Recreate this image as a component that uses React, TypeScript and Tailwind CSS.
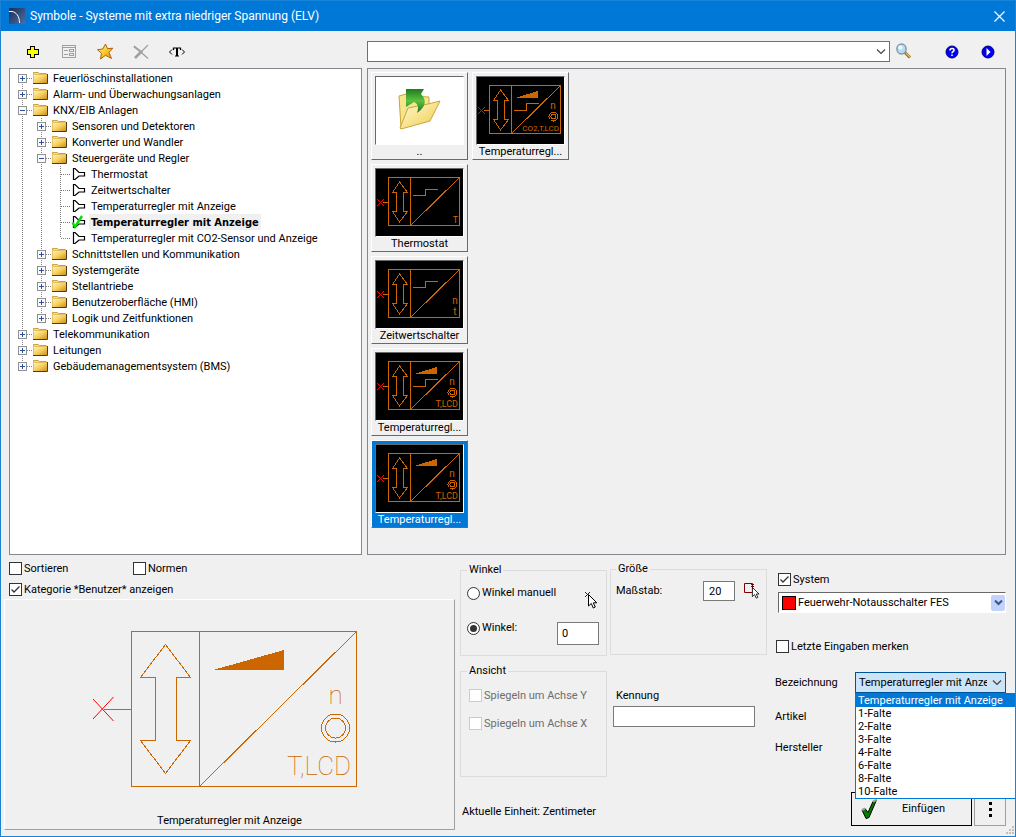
import React, { useState } from 'react';

interface TreeRow {
  label: string;
  depth: number;
  kind: 'open' | 'closed' | 'leaf';
  last?: boolean;
}

const treeRows: TreeRow[] = [
  { label: 'Feuerlöschinstallationen', depth: 0, kind: 'closed' },
  { label: 'Alarm- und Überwachungsanlagen', depth: 0, kind: 'closed' },
  { label: 'KNX/EIB Anlagen', depth: 0, kind: 'open' },
  { label: 'Sensoren und Detektoren', depth: 1, kind: 'closed' },
  { label: 'Konverter und Wandler', depth: 1, kind: 'closed' },
  { label: 'Steuergeräte und Regler', depth: 1, kind: 'open' },
  { label: 'Thermostat', depth: 2, kind: 'leaf' },
  { label: 'Zeitwertschalter', depth: 2, kind: 'leaf' },
  { label: 'Temperaturregler mit Anzeige', depth: 2, kind: 'leaf' },
  { label: 'Temperaturregler mit Anzeige', depth: 2, kind: 'leaf' },
  { label: 'Temperaturregler mit CO2-Sensor und Anzeige', depth: 2, kind: 'leaf', last: true },
  { label: 'Schnittstellen und Kommunikation', depth: 1, kind: 'closed' },
  { label: 'Systemgeräte', depth: 1, kind: 'closed' },
  { label: 'Stellantriebe', depth: 1, kind: 'closed' },
  { label: 'Benutzeroberfläche (HMI)', depth: 1, kind: 'closed' },
  { label: 'Logik und Zeitfunktionen', depth: 1, kind: 'closed', last: true },
  { label: 'Telekommunikation', depth: 0, kind: 'closed' },
  { label: 'Leitungen', depth: 0, kind: 'closed' },
  { label: 'Gebäudemanagementsystem (BMS)', depth: 0, kind: 'closed', last: true },
];

const names = [
  'Temperaturregler mit Anzeige',
  '1-Falte',
  '2-Falte',
  '3-Falte',
  '4-Falte',
  '6-Falte',
  '8-Falte',
  '10-Falte',
];

/* ---------- Icons ---------- */

const AppIcon = () => (
  <svg width="16" height="16" viewBox="0 0 16 16">
    <defs>
      <linearGradient id="app" x1="0" y1="0" x2="1" y2="1">
        <stop offset="0" stopColor="#1b2c55" />
        <stop offset="1" stopColor="#4d6ea6" />
      </linearGradient>
    </defs>
    <rect width="16" height="16" fill="url(#app)" />
    <path d="M0 3.5H3C7 4 10.5 8 10.5 15" fill="none" stroke="#fff" />
  </svg>
);

const PlusIcon = () => (
  <svg width="14" height="14" viewBox="0 0 14 14" shapeRendering="crispEdges">
    <path d="M4.5 1.5H8.5V4.5H12.5V9.5H8.5V12.5H4.5V9.5H1.5V4.5H4.5Z" fill="#ffff00" stroke="#000" />
  </svg>
);

const FormIcon = () => (
  <svg width="16" height="16" viewBox="0 0 16 16" fill="none" stroke="#a0a0a0" shapeRendering="crispEdges">
    <path d="M1.5 1.5H14.5V13.5H1.5ZM1 3.5H15M3 6.5H7M3 10.5H7M8.5 5.5H12.5V7.5H8.5ZM8.5 9.5H12.5V11.5H8.5Z" />
  </svg>
);

const StarIcon = () => (
  <svg width="18" height="18" viewBox="0 0 18 18">
    <defs>
      <linearGradient id="star" x1="0" y1="0" x2="1" y2="1">
        <stop offset="0" stopColor="#fff3a0" />
        <stop offset="0.5" stopColor="#ffc92e" />
        <stop offset="1" stopColor="#d88a10" />
      </linearGradient>
    </defs>
    <path
      d="M9.5 1L11.5 5.7L16.8 5.2L13 9.5L15.5 15.5L9.5 12.3L4.5 16L5.5 10.3L1.5 6.7L6.8 6Z"
      fill="url(#star)"
      stroke="#a8650c"
      strokeLinejoin="round"
    />
  </svg>
);

const DeleteIcon = () => (
  <svg width="18" height="16" viewBox="0 0 18 16" fill="none" stroke="#a0a0a0">
    <path d="M2 2L16 14.5" strokeWidth="1.4" />
    <path d="M2 2.5L8 7" strokeWidth="2" />
    <path d="M16 1L9.5 7.5" strokeWidth="1.2" />
    <path d="M10 7L3 14" strokeWidth="2.6" />
  </svg>
);

const TextTagIcon = () => (
  <svg width="18" height="14" viewBox="0 0 18 14" fill="none" stroke="#000">
    <path d="M4 4.5L1.5 7L4 9.5M14 4.5L16.5 7L14 9.5" />
    <path d="M5.5 5V3H12.5V5M7 11H11" strokeWidth="1.2" />
    <path d="M9 3V11" strokeWidth="2" />
  </svg>
);

const MagnifierIcon = () => (
  <svg width="18" height="18" viewBox="0 0 18 18">
    <path d="M10 9.5L15 14.5" stroke="#8a6a28" strokeWidth="3" />
    <path d="M11 10L15 14" stroke="#e8bd55" strokeWidth="1.4" />
    <ellipse cx="6.5" cy="6" rx="4.6" ry="5" fill="#b9dcf2" stroke="#8494a5" strokeWidth="1.4" />
    <ellipse cx="5.5" cy="4.5" rx="2.2" ry="2" fill="#f2faff" />
  </svg>
);

const HelpIcon = () => (
  <svg width="14" height="14" viewBox="0 0 14 14">
    <circle cx="7" cy="7" r="6" fill="#0000f0" stroke="#000080" />
    <path d="M5 5.5C5 2.8 9.3 2.9 9 5.3C8.8 6.7 7 6.5 7 8.2M7 9.5V11" fill="none" stroke="#fff" strokeWidth="1.6" />
  </svg>
);

const PlayIcon = () => (
  <svg width="14" height="14" viewBox="0 0 14 14">
    <circle cx="7" cy="7" r="6" fill="#0000f0" stroke="#000080" />
    <path d="M5.5 3L9.5 7L5.5 11Z" fill="#fff" />
  </svg>
);

const FolderIcon = () => (
  <svg width="17" height="14" viewBox="0 0 17 14" className="shrink-0">
    <defs>
      <linearGradient id="folder" x1="0" y1="0" x2="1" y2="1">
        <stop offset="0" stopColor="#fff6bf" />
        <stop offset="0.5" stopColor="#f7d061" />
        <stop offset="1" stopColor="#c98d13" />
      </linearGradient>
    </defs>
    <path d="M1.5 3V1.5H6.5L7.5 2.5H14.5V4" fill="#f3dd9a" stroke="#c9a24b" />
    <path d="M1 3.5H15V12.5H1Z" fill="url(#folder)" />
    <path d="M1.5 12V3.5H14" fill="none" stroke="#e6bd58" />
    <path d="M1 12.5H15.5V3" fill="none" stroke="#4f3c12" />
  </svg>
);

const LeafIcon = ({ checked }: { checked: boolean }) => (
  <svg width="17" height="16" viewBox="0 0 17 16" fill="none" className="shrink-0">
    <path d="M3.5 2.5V13.5H5L9 10H14.5V6.5H9L5 2.5Z" fill="#fff" stroke="#000" strokeWidth="1.2" />
    {checked && <path d="M2.5 8.5L5 13L12 2" stroke="#00e000" strokeWidth="2.4" />}
  </svg>
);

const ChevronIcon = () => (
  <svg width="10" height="6" viewBox="0 0 10 6" fill="none" stroke="#444">
    <path d="M1 0.5L5 4.5L9 0.5" strokeWidth="1.2" />
  </svg>
);

const CursorShape = () => (
  <path d="M0.5 0.5V12L3.3 9.5L5.3 14L7.3 13L5.3 8.8H8.8Z" fill="#fff" stroke="#000" />
);

const UpFolderIcon = () => (
  <svg width="87" height="67" viewBox="0 0 87 67">
    <defs>
      <linearGradient id="upfolder" x1="0" y1="0" x2="1" y2="1">
        <stop offset="0" stopColor="#fffdd8" />
        <stop offset="1" stopColor="#f0c948" />
      </linearGradient>
      <linearGradient id="uparrow" x1="0" y1="0" x2="0" y2="1">
        <stop offset="0" stopColor="#217a1f" />
        <stop offset="0.5" stopColor="#5cc23f" />
        <stop offset="1" stopColor="#1e6e22" />
      </linearGradient>
    </defs>
    <path d="M23 19L30 17L33 19L53 20L53 43L25 51Z" fill="#f8e48a" stroke="#c9a53a" />
    <path d="M24 51L32 31L52 27L64 24L54 44L25 52Z" fill="url(#upfolder)" stroke="#c9a53a" />
    <path d="M30 12H48L45 17C51 23 50 30 41 36C43 30 42 27 38 25L30 30Z" fill="url(#uparrow)" />
  </svg>
);

/* ---------- CAD symbol drawings ---------- */

interface SymbolThumbProps {
  step?: 'high' | 'low';
  wedge?: boolean;
  display?: string;
  sensor?: boolean;
  counter?: boolean;
}

const SymbolThumb = ({ step, wedge, display, sensor, counter }: SymbolThumbProps) => (
  <svg width="87" height="67" viewBox="1 1 87 67" fill="none" stroke="#cc6600" shapeRendering="crispEdges">
    <rect width="88" height="68" fill="#000" stroke="none" />
    <path d="M13.5 9.5H84.5V57.5H13.5ZM35.5 9.5V57.5M8 34.5H13" />
    {step === 'high' && <path d="M38 27.5H50.5V21.5H63" />}
    {step === 'low' && <path d="M38 34.5H50.5V27.5H63" />}
    <path d="M35.5 57.5L84.5 9.5" />
    <path d="M24.5 14L32.5 24.5H28.5V43.5H32.5L24.5 54L17.5 43.5H21.5V24.5H17.5Z" />
    <path d="M2 31L9 38M9 31L2 38" stroke="#ff0000" shapeRendering="auto" />
    {wedge && <path d="M39 22L62 15V22Z" fill="#cc6600" stroke="none" />}
    {sensor && (
      <>
        <circle cx="77.5" cy="40.5" r="4.5" />
        <circle cx="77.5" cy="40.5" r="2.5" />
        <text x="77" y="33" textAnchor="middle" fontSize="10" fill="#cc6600" stroke="none">n</text>
      </>
    )}
    {counter && (
      <>
        <text x="80" y="44" textAnchor="middle" fontSize="10" fill="#cc6600" stroke="none">n</text>
        <text x="80" y="55" textAnchor="middle" fontSize="10" fill="#cc6600" stroke="none">t</text>
      </>
    )}
    {display && (
      <text
        x="83"
        y="55"
        textAnchor="end"
        fontSize={display.length > 5 ? 8 : 9}
        fill="#cc6600"
        stroke="none"
      >
        {display}
      </text>
    )}
  </svg>
);

const SymbolPreview = () => (
  <svg width="275" height="158" viewBox="92 630 275 158" fill="none" stroke="#cc6600" shapeRendering="crispEdges">
    <path d="M131.5 631.5H356.5V786.5H131.5ZM199.5 631.5V786.5M104 709.5H131" />
    <path d="M199.5 786.5L356.5 631.5" />
    <path d="M165.5 644.5L190.5 677.5H176.5V740.5H190.5L165.5 773.5L140.5 740.5H155.5V677.5H140.5Z" />
    <path d="M93 699L113.5 721M93 719L113.5 697" stroke="#ff0000" shapeRendering="auto" />
    <path d="M213 670L284 650V670Z" fill="#cc6600" stroke="none" />
    <circle cx="335.5" cy="728" r="14" />
    <circle cx="335.5" cy="728" r="10" />
    <g fill="#cc6600" stroke="none" fontWeight="100">
      <text x="335.5" y="704" textAnchor="middle" fontSize="26">n</text>
      <text x="351" y="775" textAnchor="end" fontSize="26">T,LCD</text>
    </g>
  </svg>
);

/* ---------- Form parts ---------- */

interface CheckBoxProps {
  label: string;
  defaultChecked?: boolean;
  disabled?: boolean;
}

const CheckBox: React.FC<CheckBoxProps> = ({ label, defaultChecked, disabled }) => (
  <label className={disabled ? 'flex items-center gap-0.5 text-[#6d6d6d]' : 'flex items-center gap-0.5'}>
    <span className="relative flex">
      <input
        type="checkbox"
        defaultChecked={defaultChecked}
        disabled={disabled}
        className="peer size-[13px] appearance-none border border-[#333] bg-white disabled:border-[#ccc]"
      />
      <svg
        width="13"
        height="13"
        viewBox="0 0 13 13"
        fill="none"
        stroke="#333"
        className="pointer-events-none absolute inset-0 hidden peer-checked:block"
      >
        <path d="M2.5 6.5L5 9L10.5 3.5" strokeWidth="1.3" />
      </svg>
    </span>
    <span className="pt-0.5 leading-[14px]">{label}</span>
  </label>
);

interface RadioProps {
  label: string;
  checked: boolean;
  onChange: () => void;
}

const Radio: React.FC<RadioProps> = ({ label, checked, onChange }) => (
  <label className="flex items-center gap-0.5">
    <input
      type="radio"
      name="angle"
      checked={checked}
      onChange={onChange}
      className="flex size-[13px] appearance-none items-center justify-center rounded-full border border-[#333] bg-white before:size-[7px] before:rounded-full checked:before:bg-[#333]"
    />
    {label}
  </label>
);

/* ---------- Tree ---------- */

const Guide = ({ row, level }: { row: TreeRow; level: number }) => {
  const own = level === row.depth;
  const first = row === treeRows[0];
  return (
    <svg width="19" height="16" viewBox="0 0 19 16" className="shrink-0" shapeRendering="crispEdges">
      <g stroke="#808080" strokeDasharray="1 1">
        <path d={own && first ? 'M9.5 8V16' : own && row.last ? 'M9.5 0V8' : 'M9.5 0V16'} />
        {own && <path d="M10 8.5H19" />}
      </g>
      {own && row.kind !== 'leaf' && (
        <>
          <rect x="5.5" y="4.5" width="8" height="8" fill="#fafafa" stroke="#919191" />
          <path d={row.kind === 'open' ? 'M7 8.5H12' : 'M7 8.5H12M9.5 6V11'} stroke="#2c4f9e" />
        </>
      )}
    </svg>
  );
};

const SymbolTree: React.FC = () => {
  const [selected, setSelected] = useState(9);

  return (
    <ul className="w-[353px] shrink-0 border border-[#828790] bg-white pl-[3px] pt-px">
      {treeRows.map((row, i) => (
        <li key={i} className="flex h-4 items-center">
          {Array.from({ length: row.depth + 1 }, (_, level) => (
            <Guide key={level} row={row} level={level} />
          ))}
          {row.kind === 'leaf' ? <LeafIcon checked={i === selected} /> : <FolderIcon />}
          <button
            type="button"
            onClick={() => setSelected(i)}
            className={
              i === selected
                ? "ml-0.5 bg-[#f0f0f0] px-0.5 pt-0.5 font-['DejaVu_Sans_Condensed'] leading-[14px] font-bold whitespace-nowrap"
                : 'ml-0.5 px-0.5 pt-0.5 leading-[14px] whitespace-nowrap'
            }
          >
            {row.label}
          </button>
        </li>
      ))}
    </ul>
  );
};

/* ---------- Thumbnails ---------- */

interface ThumbProps {
  label: string;
  selected?: boolean;
  children: React.ReactNode;
}

const Thumb: React.FC<ThumbProps> = ({ label, selected, children }) => (
  <button
    type="button"
    className={
      selected
        ? 'flex h-[88px] w-[97px] flex-col items-center border border-t-white border-r-[#696969] border-b-[#696969] border-l-white bg-[#0078d7] pt-[3px] text-white'
        : 'flex h-[88px] w-[97px] flex-col items-center border border-t-white border-r-[#696969] border-b-[#696969] border-l-white pt-[3px]'
    }
  >
    <span className="flex h-[69px] w-[89px] shrink-0 overflow-hidden border border-t-[#696969] border-r-white border-b-white border-l-[#696969] bg-white">
      {children}
    </span>
    <span className="w-[89px] truncate leading-[14px]">{label}</span>
  </button>
);

const App: React.FC = () => {
  const [manual, setManual] = useState(false);
  const [name, setName] = useState(names[0]);
  const [open, setOpen] = useState(true);

  return (
    <div className="flex min-h-screen flex-col overflow-hidden border border-[#1883d7] bg-[#f0f0f0] font-[Roboto,sans-serif] text-[11px] leading-4 text-black">
      {/* Title bar */}
      <header className="flex h-[30px] items-center bg-[#0078d7] pr-2.5 pl-2 text-white">
        <AppIcon />
        <h1 className="ml-[5px] text-xs">Symbole - Systeme mit extra niedriger Spannung (ELV)</h1>
        <button type="button" aria-label="Schließen" className="ml-auto">
          <svg width="11" height="11" viewBox="0 0 11 11" stroke="#fff" strokeWidth="1.2">
            <path d="M0.5 0.5L10.5 10.5M10.5 0.5L0.5 10.5" />
          </svg>
        </button>
      </header>

      {/* Toolbar */}
      <div className="flex h-[37px] items-center pt-1 pr-[15px] pl-5">
        <div className="flex w-[346px] shrink-0 gap-3">
          <button type="button" aria-label="Neu" className="flex size-6 items-center justify-center"><PlusIcon /></button>
          <button type="button" aria-label="Eigenschaften" className="flex size-6 items-center justify-center"><FormIcon /></button>
          <button type="button" aria-label="Favorit" className="flex size-6 items-center justify-center"><StarIcon /></button>
          <button type="button" aria-label="Löschen" className="flex size-6 items-center justify-center"><DeleteIcon /></button>
          <button type="button" aria-label="Text" className="flex size-6 items-center justify-center"><TextTagIcon /></button>
        </div>
        <div className="flex h-[21px] flex-1 items-center border border-[#707070] bg-white pr-[3px]">
          <input type="text" aria-label="Suche" className="h-full flex-1 px-1 outline-none" />
          <ChevronIcon />
        </div>
        <button type="button" aria-label="Suchen" className="ml-0.5 flex size-6 items-center justify-center"><MagnifierIcon /></button>
        <button type="button" aria-label="Hilfe" className="ml-6 flex size-6 items-center justify-center"><HelpIcon /></button>
        <button type="button" aria-label="Video" className="ml-3 flex size-6 items-center justify-center"><PlayIcon /></button>
      </div>

      {/* Tree and thumbnails */}
      <main className="flex flex-1 gap-[5px] pr-[9px] pl-2">
        <SymbolTree />
        <div className="flex flex-1 items-start gap-1 border border-[#828790] p-[3px]">
          <div className="flex flex-col gap-1">
            <Thumb label=".."><UpFolderIcon /></Thumb>
            <Thumb label="Thermostat">
              <SymbolThumb step="high" display="T" />
            </Thumb>
            <Thumb label="Zeitwertschalter">
              <SymbolThumb step="high" counter />
            </Thumb>
            <Thumb label="Temperaturregl...">
              <SymbolThumb step="low" wedge sensor display="T,LCD" />
            </Thumb>
            <Thumb label="Temperaturregl..." selected>
              <SymbolThumb wedge sensor display="T,LCD" />
            </Thumb>
          </div>
          <Thumb label="Temperaturregl...">
            <SymbolThumb step="low" wedge sensor display="CO2,T,LCD" />
          </Thumb>
        </div>
      </main>

      {/* Options */}
      <footer className="flex pl-[3px]">
        <section className="flex w-[451px] shrink-0 flex-col pb-1.5">
          <div className="flex h-[44px] flex-col gap-[5px] pt-[5px] pl-[5px]">
            <div className="flex">
              <div className="w-[124px]"><CheckBox label="Sortieren" /></div>
              <CheckBox label="Normen" />
            </div>
            <CheckBox label="Kategorie *Benutzer* anzeigen" defaultChecked />
          </div>
          <div className="flex flex-1 flex-col items-center justify-between border border-t-white border-r-[#a0a0a0] border-b-[#a0a0a0] border-l-white pt-[30px]">
            <SymbolPreview />
            <p>Temperaturregler mit Anzeige</p>
          </div>
        </section>

        <section className="ml-[5px] flex w-[147px] shrink-0 flex-col gap-[7px] pt-[7px]">
          <fieldset className="h-[94px] border border-[#dcdcdc] px-1.5">
            <legend className="px-0.5">Winkel</legend>
            <div className="flex h-[30px] items-center justify-between pr-0.5">
              <Radio label="Winkel manuell" checked={manual} onChange={() => setManual(true)} />
              <svg width="16" height="32" viewBox="0 0 16 32">
                <path d="M3 15L8 20M8 15L3 20" stroke="#800000" />
                <g transform="translate(6 17)"><CursorShape /></g>
              </svg>
            </div>
            <div className="flex h-10 items-center justify-between pr-px">
              <Radio label="Winkel:" checked={!manual} onChange={() => setManual(false)} />
              <input
                type="text"
                aria-label="Winkelwert"
                defaultValue="0"
                className="mt-2.5 h-[23px] w-[42px] border border-[#7a7a7a] bg-white px-1"
              />
            </div>
          </fieldset>
          <fieldset className="h-[114px] border border-[#dcdcdc] px-1.5">
            <legend className="px-0.5">Ansicht</legend>
            <div className="flex flex-col gap-3 pt-2 pl-0.5">
              <CheckBox label="Spiegeln um Achse Y" disabled />
              <CheckBox label="Spiegeln um Achse X" disabled />
            </div>
          </fieldset>
          <p className="mt-5 pl-0.5 whitespace-nowrap">Aktuelle Einheit: Zentimeter</p>
        </section>

        <section className="ml-[3px] w-[156px] shrink-0 pt-1.5">
          <fieldset className="h-[94px] border border-[#dcdcdc] px-[5px]">
            <legend className="px-0.5">Größe</legend>
            <div className="flex h-7 items-center">
              <label htmlFor="scale" className="w-[87px]">Maßstab:</label>
              <input
                id="scale"
                type="text"
                defaultValue="20"
                className="h-5 w-8 border border-[#7a7a7a] bg-white px-[5px]"
              />
              <svg width="18" height="18" viewBox="0 0 18 18" className="ml-2">
                <path d="M1.5 1.5H9.5V10.5H1.5ZM8 2L11 5M11 2L8 5" fill="none" stroke="#800000" />
                <g transform="translate(9 5) scale(0.8)"><CursorShape /></g>
              </svg>
            </div>
          </fieldset>
          <div className="mt-[33px] pl-[3px]">
            <label htmlFor="code" className="block pl-[3px]">Kennung</label>
            <input id="code" type="text" className="mt-0.5 block h-[21px] w-[142px] border border-[#7a7a7a] bg-white px-1" />
          </div>
        </section>

        <section className="ml-[9px] flex-1 pt-4 pr-[9px]">
          <div className="pl-[3px]">
            <CheckBox label="System" defaultChecked />
            <div className="mt-[5px] flex h-[21px] items-center gap-0.5 border border-t-[#696969] border-r-white border-b-white border-l-[#696969] bg-white pl-[3px]">
              <span className="size-3.5 border border-black bg-[#ff0000]" />
              <select aria-label="System" className="h-full flex-1 appearance-none">
                <option>Feuerwehr-Notausschalter FES</option>
              </select>
              <span className="flex h-4 w-3.5 items-center justify-center rounded-xs bg-[#c1d3fb]">
                <svg width="9" height="6" viewBox="0 0 9 6" fill="none" stroke="#3c5487">
                  <path d="M1 0.5L4.5 4L8 0.5" strokeWidth="2" />
                </svg>
              </span>
            </div>
          </div>
          <div className="mt-[25px] pl-px">
            <CheckBox label="Letzte Eingaben merken" />
          </div>
          <div className="mt-[18px] flex items-center">
            <label htmlFor="name" className="w-20">Bezeichnung</label>
            <div className="relative flex-1">
              <select
                id="name"
                value={name}
                onChange={e => setName(e.target.value)}
                onClick={() => setOpen(!open)}
                className="block h-[21px] w-full appearance-none border border-[#005499] bg-[#cce4f7] pr-[18px] pl-[3px]"
              >
                {names.map(item => (
                  <option key={item}>{item}</option>
                ))}
              </select>
              <span className="pointer-events-none absolute top-2 right-1"><ChevronIcon /></span>
              {open && (
                <ul className="absolute top-[21px] left-0 z-10 w-[170px] border border-[#0078d7] bg-white leading-[13px]">
                  {names.map(item => (
                    <li
                      key={item}
                      onClick={() => { setName(item); setOpen(false); }}
                      className={item === name ? 'bg-[#0078d7] px-0.5 text-white' : 'px-0.5'}
                    >
                      {item}
                    </li>
                  ))}
                </ul>
              )}
            </div>
          </div>
          <p className="mt-4">Artikel</p>
          <p className="mt-[15px]">Hersteller</p>
          <div className="mt-9 flex h-[34px] justify-end gap-0.5">
            <button type="button" className="flex w-[121px] items-center border border-black pl-2">
              <svg width="20" height="22" viewBox="0 0 20 22">
                <path d="M2 12L5 10.5L8 14.5L13 3.5L16.5 2L9 19.5L6 20.5Z" fill="#008000" stroke="#000" />
                <path d="M2 12L5 10.5M13 3.5L16.5 2" stroke="#a0a0a0" strokeWidth="2" />
              </svg>
              <span className="flex-1 pr-1 text-center">Einfügen</span>
            </button>
            <button type="button" aria-label="Mehr" className="flex w-8 items-center justify-center border border-[#a0a0a0]">
              <svg width="3" height="15" viewBox="0 0 3 15">
                <path d="M0 0H3V3H0ZM0 6H3V9H0ZM0 12H3V15H0Z" />
              </svg>
            </button>
          </div>
          <div className="flex h-2.5 justify-end">
            <svg width="8" height="8" viewBox="0 0 8 8" fill="#bfbfbf" className="-mr-2">
              <path d="M6 0H8V2H6ZM3 3H5V5H3ZM6 3H8V5H6ZM0 6H2V8H0ZM3 6H5V8H3ZM6 6H8V8H6Z" />
            </svg>
          </div>
        </section>
      </footer>
    </div>
  );
};

export default App;
